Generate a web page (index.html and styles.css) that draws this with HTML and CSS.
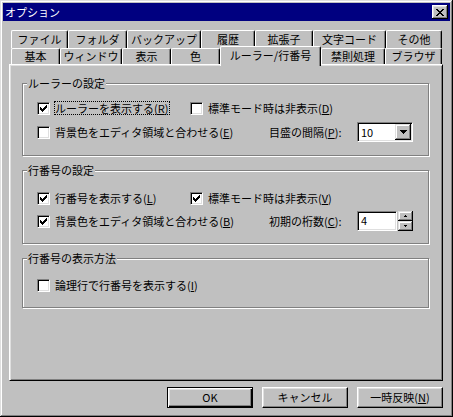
FILE: index.html
```html
<!DOCTYPE html>
<html lang="ja">
<head>
<meta charset="utf-8">
<title>オプション</title>
<link rel="stylesheet" href="styles.css">
</head>
<body>
<div class="window">
  <div class="titlebar">
    <span class="title">オプション</span>
    <span class="close"><svg width="8" height="7" viewBox="0 0 8 7" shape-rendering="crispEdges"><path fill="#000" d="M0 0h2v1H0zM6 0h2v1H6zM1 1h2v1H1zM5 1h2v1H5zM2 2h4v1H2zM3 3h2v1H3zM2 4h4v1H2zM1 5h2v1H1zM5 5h2v1H5zM0 6h2v1H0zM6 6h2v1H6z"/></svg></span>
  </div>

  <div class="tabs">
    <div class="tabrow back">
      <div class="tab">ファイル</div>
      <div class="tab">フォルダ</div>
      <div class="tab">バックアップ</div>
      <div class="tab">履歴</div>
      <div class="tab">拡張子</div>
      <div class="tab">文字コード</div>
      <div class="tab">その他</div>
    </div>
    <div class="tabrow front">
      <div class="tab">基本</div>
      <div class="tab">ウィンドウ</div>
      <div class="tab">表示</div>
      <div class="tab">色</div>
      <div class="tab sel">ルーラー/行番号</div>
      <div class="tab">禁則処理</div>
      <div class="tab">ブラウザ</div>
    </div>
  </div>

  <div class="panel">
    <div class="group g1">
      <span class="legend">ルーラーの設定</span>
      <div class="row">
        <div class="cell col1"><span class="cb"><svg width="7" height="7" viewBox="0 0 7 7" shape-rendering="crispEdges"><path fill="#000" d="M0 2h1v3H0zM1 3h1v3H1zM2 4h1v3H2zM3 3h1v3H3zM4 2h1v3H4zM5 1h1v3H5zM6 0h1v3H6z"/></svg></span><span class="lbl focus">ルーラーを表示する(<u>R</u>)</span></div>
        <div class="cell"><span class="cb"></span><span class="lbl">標準モード時は非表示(<u>D</u>)</span></div>
      </div>
      <div class="row">
        <div class="cell col1w"><span class="cb"></span><span class="lbl">背景色をエディタ領域と合わせる(<u>E</u>)</span></div>
        <div class="flabel">目盛の間隔(<u>P</u>):</div>
        <div class="combo"><span class="val">10</span><span class="dd"><svg width="7" height="4" viewBox="0 0 7 4" shape-rendering="crispEdges"><path fill="#000" d="M0 0h7v1H0zM1 1h5v1H1zM2 2h3v1H2zM3 3h1v1H3z"/></svg></span></div>
      </div>
    </div>

    <div class="group g2">
      <span class="legend">行番号の設定</span>
      <div class="row">
        <div class="cell col1"><span class="cb"><svg width="7" height="7" viewBox="0 0 7 7" shape-rendering="crispEdges"><path fill="#000" d="M0 2h1v3H0zM1 3h1v3H1zM2 4h1v3H2zM3 3h1v3H3zM4 2h1v3H4zM5 1h1v3H5zM6 0h1v3H6z"/></svg></span><span class="lbl">行番号を表示する(<u>L</u>)</span></div>
        <div class="cell"><span class="cb"><svg width="7" height="7" viewBox="0 0 7 7" shape-rendering="crispEdges"><path fill="#000" d="M0 2h1v3H0zM1 3h1v3H1zM2 4h1v3H2zM3 3h1v3H3zM4 2h1v3H4zM5 1h1v3H5zM6 0h1v3H6z"/></svg></span><span class="lbl">標準モード時は非表示(<u>V</u>)</span></div>
      </div>
      <div class="row">
        <div class="cell col1w"><span class="cb"><svg width="7" height="7" viewBox="0 0 7 7" shape-rendering="crispEdges"><path fill="#000" d="M0 2h1v3H0zM1 3h1v3H1zM2 4h1v3H2zM3 3h1v3H3zM4 2h1v3H4zM5 1h1v3H5zM6 0h1v3H6z"/></svg></span><span class="lbl">背景色をエディタ領域と合わせる(<u>B</u>)</span></div>
        <div class="flabel">初期の桁数(<u>C</u>):</div>
        <div class="spin">
          <div class="edit">4</div>
          <div class="spinbtns">
            <span class="sb"><svg width="3" height="2" viewBox="0 0 3 2" shape-rendering="crispEdges"><path fill="#000" d="M1 0h1v1H1zM0 1h3v1H0z"/></svg></span>
            <span class="sb"><svg width="3" height="2" viewBox="0 0 3 2" shape-rendering="crispEdges"><path fill="#000" d="M0 0h3v1H0zM1 1h1v1H1z"/></svg></span>
          </div>
        </div>
      </div>
    </div>

    <div class="group g3">
      <span class="legend">行番号の表示方法</span>
      <div class="row">
        <div class="cell"><span class="cb"></span><span class="lbl">論理行で行番号を表示する(<u>I</u>)</span></div>
      </div>
    </div>
  </div>

  <div class="buttons">
    <div class="btn default">OK</div>
    <div class="btn">キャンセル</div>
    <div class="btn">一時反映(<u>N</u>)</div>
  </div>
</div>
</body>
</html>
```

FILE: styles.css
```css
* { box-sizing: border-box; }

html, body {
  margin: 0;
  padding: 0;
}

body {
  width: 453px;
  height: 417px;
  overflow: hidden;
  background: #c0c0c0;
  font-family: "Noto Sans CJK JP", "Noto Sans", sans-serif;
  font-size: 11px;
  color: #000;
}

.window {
  width: 453px;
  height: 417px;
  padding: 3px;
  background: #c0c0c0;
  display: flex;
  flex-direction: column;
  box-shadow: inset -1px -1px 0 #000, inset 1px 1px 0 #dfdfdf,
              inset -2px -2px 0 #808080, inset 2px 2px 0 #fff;
}

/* title bar */
.titlebar {
  height: 18px;
  flex: none;
  background: #000080;
  color: #fff;
  display: flex;
  align-items: center;
  justify-content: space-between;
  padding: 0 2px 0 2px;
}

.title {
  line-height: 16px;
}

.close {
  width: 16px;
  height: 14px;
  background: #c0c0c0;
  display: flex;
  align-items: center;
  justify-content: center;
  box-shadow: inset -1px -1px 0 #000, inset 1px 1px 0 #fff,
              inset -2px -2px 0 #808080, inset 2px 2px 0 #dfdfdf;
}

/* tabs */
.tabs {
  flex: none;
  margin: 9px 0 0 8px;
  width: 431px;
  display: flex;
  flex-direction: column;
  position: relative;
  z-index: 1;
}

.tabrow {
  display: flex;
}

.tab {
  flex: none;
  display: flex;
  align-items: center;
  justify-content: center;
  white-space: nowrap;
  background: #c0c0c0;
  border-top: 1px solid #fff;
  border-left: 1px solid #fff;
  border-right: 1px solid #000;
  border-radius: 2px 2px 0 0;
  box-shadow: inset -1px 0 0 #808080;
  line-height: 13px;
}

.back .tab { height: 18px; padding-bottom: 1px; }
.front .tab { height: 16px; }

.back .tab:nth-child(1) { width: 57px; }
.back .tab:nth-child(2) { width: 59px; }
.back .tab:nth-child(3) { width: 74px; }
.back .tab:nth-child(4) { width: 54px; }
.back .tab:nth-child(5) { width: 58px; }
.back .tab:nth-child(6) { width: 73px; }
.back .tab:nth-child(7) { width: 56px; }

.front .tab:nth-child(1) { width: 49px; }
.front .tab:nth-child(2) { width: 62px; }
.front .tab:nth-child(3) { width: 49px; }
.front .tab:nth-child(4) { width: 49px; }
.front .tab:nth-child(5) { width: 101px; }
.front .tab:nth-child(6) { width: 64px; }
.front .tab:nth-child(7) { width: 57px; }

.front .tab.sel {
  height: 20px;
  margin-top: -2px;
  margin-bottom: -2px;
  padding-bottom: 2px;
  position: relative;
  z-index: 2;
}

/* panel */
.panel {
  flex: none;
  margin-left: 6px;
  width: 434px;
  height: 317px;
  border: 1px solid;
  border-color: #fff #000 #000 #fff;
  box-shadow: inset 1px 1px 0 #dfdfdf, inset -1px -1px 0 #808080;
  padding: 18px 0 0 12px;
  display: flex;
  flex-direction: column;
}

.group {
  position: relative;
  width: 407px;
  border: 1px solid #808080;
  box-shadow: inset 1px 1px 0 #fff, 1px 1px 0 #fff;
  padding-left: 14px;
  display: flex;
  flex-direction: column;
}

.g1 { padding-top: 14px; padding-bottom: 13px; gap: 4px; }
.g2 { margin-top: 14px; padding-top: 17px; padding-bottom: 12px; gap: 3px; }
.g3 { margin-top: 14px; padding-top: 16px; padding-bottom: 12px; }

.legend {
  position: absolute;
  top: -7px;
  left: 4px;
  padding: 0 1px;
  background: #c0c0c0;
  line-height: 13px;
  white-space: nowrap;
}

.row {
  height: 20px;
  display: flex;
  align-items: center;
}

.cell {
  display: flex;
  align-items: center;
  white-space: nowrap;
}

.col1 { width: 153px; }
.col1w { width: 232px; }

.flabel {
  width: 88px;
  white-space: nowrap;
  line-height: 13px;
}

.cb {
  flex: none;
  width: 13px;
  height: 13px;
  background: #fff;
  border: 1px solid;
  border-color: #808080 #fff #fff #808080;
  box-shadow: inset 1px 1px 0 #000, inset -1px -1px 0 #dfdfdf;
  display: flex;
  align-items: center;
  justify-content: center;
}

.lbl {
  margin-left: 4px;
  padding-right: 1px;
  border: 1px dotted transparent;
  line-height: 12px;
}

.lbl.focus { border-color: #000; }

u { text-decoration-thickness: 1px; text-underline-offset: 1px; }

/* combo box */
.combo {
  width: 56px;
  height: 20px;
  background: #fff;
  border: 1px solid;
  border-color: #808080 #fff #fff #808080;
  box-shadow: inset 1px 1px 0 #000, inset -1px -1px 0 #dfdfdf;
  padding: 1px;
  display: flex;
  align-items: center;
}

.val {
  flex: 1;
  padding-left: 2px;
  line-height: 13px;
}

.dd {
  width: 16px;
  height: 16px;
  background: #c0c0c0;
  display: flex;
  align-items: center;
  justify-content: center;
  box-shadow: inset -1px -1px 0 #000, inset 1px 1px 0 #dfdfdf,
              inset -2px -2px 0 #808080, inset 2px 2px 0 #fff;
}

/* spin edit */
.spin {
  display: flex;
  gap: 1px;
}

.edit {
  width: 40px;
  height: 20px;
  background: #fff;
  border: 1px solid;
  border-color: #808080 #fff #fff #808080;
  box-shadow: inset 1px 1px 0 #000, inset -1px -1px 0 #dfdfdf;
  padding-left: 3px;
  line-height: 17px;
}

.spinbtns {
  width: 15px;
  height: 20px;
  display: flex;
  flex-direction: column;
}

.sb {
  height: 10px;
  background: #c0c0c0;
  display: flex;
  align-items: center;
  justify-content: center;
  box-shadow: inset -1px -1px 0 #000, inset 1px 1px 0 #dfdfdf,
              inset -2px -2px 0 #808080, inset 2px 2px 0 #fff;
}

/* dialog buttons */
.buttons {
  flex: none;
  margin-top: 6px;
  padding-right: 7px;
  display: flex;
  justify-content: flex-end;
  gap: 9px;
}

.btn {
  width: 86px;
  height: 21px;
  display: flex;
  align-items: center;
  justify-content: center;
  white-space: nowrap;
  background: #c0c0c0;
  line-height: 13px;
  border: 1px solid;
  border-color: #fff #000 #000 #fff;
  box-shadow: inset -1px -1px 0 #808080, inset 1px 1px 0 #dfdfdf;
}

.btn.default {
  border-color: #000;
  box-shadow: inset 1px 1px 0 #fff, inset -1px -1px 0 #000,
              inset -2px -2px 0 #808080, inset 2px 2px 0 #dfdfdf;
}
```
